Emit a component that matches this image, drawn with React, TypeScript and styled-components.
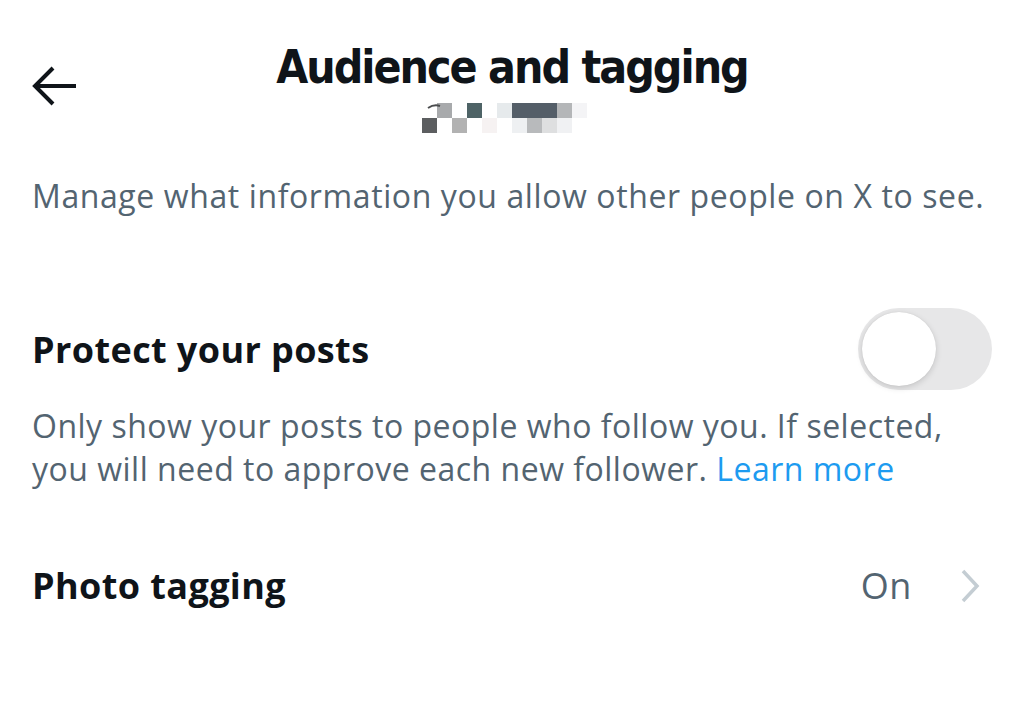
import React from "react";
import styled, { createGlobalStyle } from "styled-components";

const textDark = "#0f1419";
const textGrey = "#536471";
const linkBlue = "#1d9bf0";

const GlobalStyle = createGlobalStyle`
  html, body {
    margin: 0;
    padding: 0;
    background: #ffffff;
  }
  body {
    font-family: "Open Sans", "Liberation Sans", sans-serif;
    color: ${textDark};
  }
`;

const Page = styled.div`
  width: 1024px;
  height: 710px;
  box-sizing: border-box;
  padding: 0 32px;
  overflow: hidden;
`;

const Header = styled.header`
  display: grid;
  grid-template-columns: 1fr auto 1fr;
  align-items: start;
  padding-top: 40px;
`;

const BackButton = styled.button`
  justify-self: start;
  display: flex;
  align-items: center;
  justify-content: center;
  margin-top: 26px;
  padding: 0;
  border: 0;
  background: none;
  color: ${textDark};
  cursor: pointer;
`;

const TitleBlock = styled.div`
  display: flex;
  flex-direction: column;
  align-items: center;
`;

const Title = styled.h1`
  margin: 0;
  font-family: "DejaVu Sans Condensed", "DejaVu Sans", sans-serif;
  font-weight: 700;
  font-size: 46px;
  line-height: 54px;
  letter-spacing: -2px;
  color: ${textDark};
`;

const Handle = styled.svg`
  display: block;
  margin-top: 8px;
`;

const Description = styled.p`
  margin: 41px 0 0;
  font-size: 32px;
  line-height: 42px;
  letter-spacing: 0.6px;
  color: ${textGrey};
`;

const Row = styled.div`
  display: flex;
  align-items: center;
  justify-content: space-between;
`;

const ProtectRow = styled(Row)`
  margin-top: 91px;
`;

const PhotoRow = styled(Row)`
  margin-top: 71px;
  padding-right: 12px;
`;

const SettingLabel = styled.span`
  font-size: 36px;
  font-weight: 700;
  letter-spacing: 0.4px;
  color: ${textDark};
`;

const Toggle = styled.div`
  position: relative;
  width: 134px;
  height: 82px;
  border-radius: 41px;
  background: #e7e7e8;
`;

const Knob = styled.span`
  position: absolute;
  top: 4px;
  left: 4px;
  width: 74px;
  height: 74px;
  border-radius: 50%;
  background: #ffffff;
  box-shadow: 0 2px 6px rgba(0, 0, 0, 0.15), 0 0 1px rgba(0, 0, 0, 0.12);
`;

const Help = styled.p`
  margin: 14px 0 0;
  font-size: 32px;
  line-height: 43px;
  letter-spacing: 0.5px;
  color: ${textGrey};

  a {
    color: ${linkBlue};
    text-decoration: none;
  }
`;

const Value = styled.span`
  display: flex;
  align-items: center;
  gap: 48px;
  font-size: 36px;
  letter-spacing: 0.6px;
  color: ${textGrey};
`;

const cells: [number, number, string][] = [
  [1, 0, "#a8aaac"],
  [3, 0, "#4e6366"],
  [5, 0, "#e6eaec"],
  [6, 0, "#545e68"],
  [7, 0, "#545e68"],
  [8, 0, "#545e68"],
  [9, 0, "#b4b6b8"],
  [10, 0, "#f4f4f6"],
  [0, 1, "#5c5e60"],
  [2, 1, "#b2b2b2"],
  [4, 1, "#f6f2f2"],
  [6, 1, "#eef0f2"],
  [7, 1, "#b8babc"],
  [8, 1, "#dedfe0"],
  [9, 1, "#f0f1f3"],
];

const BlurredHandle = () => (
  <Handle width="180" height="32" viewBox="0 0 180 32">
    {cells.map(([c, r, fill], i) => (
      <rect key={i} x={c * 15} y={r * 15 + 1} width="15" height="15" fill={fill} />
    ))}
    <path d="M6 6 Q12 2 18 4" stroke="#4a4c4e" strokeWidth="2" fill="none" />
  </Handle>
);

export default function App() {
  return (
    <>
      <GlobalStyle />
      <Page>
        <Header>
          <BackButton aria-label="Back">
            <svg width="46" height="40" viewBox="0 0 46 40">
              <path
                d="M44 20H3M21 2L3 20l18 18"
                stroke="currentColor"
                strokeWidth="4"
                fill="none"
              />
            </svg>
          </BackButton>
          <TitleBlock>
            <Title>Audience and tagging</Title>
            <BlurredHandle />
          </TitleBlock>
          <div />
        </Header>

        <Description>
          Manage what information you allow other people on X to see.
        </Description>

        <ProtectRow>
          <SettingLabel>Protect your posts</SettingLabel>
          <Toggle role="switch" aria-checked="false">
            <Knob />
          </Toggle>
        </ProtectRow>
        <Help>
          Only show your posts to people who follow you. If selected, you will
          need to approve each new follower. <a href="#">Learn more</a>
        </Help>

        <PhotoRow>
          <SettingLabel>Photo tagging</SettingLabel>
          <Value>
            On
            <svg width="20" height="36" viewBox="0 0 20 36">
              <path
                d="M3 3l14 15L3 33"
                stroke="#c4cdd3"
                strokeWidth="3.5"
                fill="none"
              />
            </svg>
          </Value>
        </PhotoRow>
      </Page>
    </>
  );
}
